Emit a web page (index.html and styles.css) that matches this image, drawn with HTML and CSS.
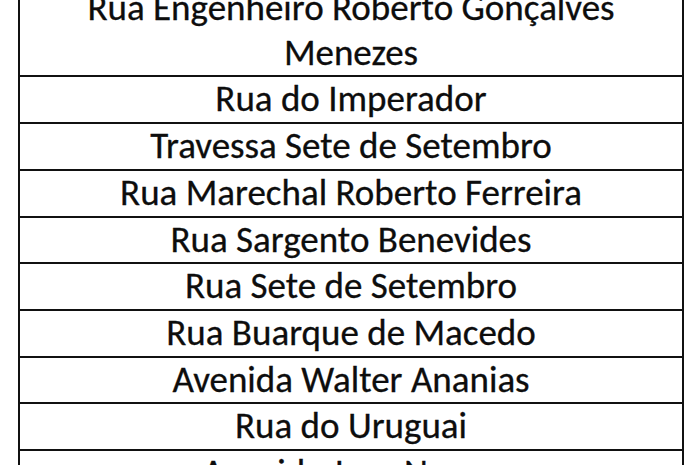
FILE: index.html
```html
<!DOCTYPE html>
<html lang="pt">
<head>
<meta charset="utf-8">
<link rel="stylesheet" href="styles.css">
</head>
<body>
<table class="streets">
  <tr><td>Rua Engenheiro Roberto Gonçalves<br>Menezes</td></tr>
  <tr><td>Rua do Imperador</td></tr>
  <tr><td>Travessa Sete de Setembro</td></tr>
  <tr><td>Rua Marechal Roberto Ferreira</td></tr>
  <tr><td>Rua Sargento Benevides</td></tr>
  <tr><td>Rua Sete de Setembro</td></tr>
  <tr><td>Rua Buarque de Macedo</td></tr>
  <tr><td>Avenida Walter Ananias</td></tr>
  <tr><td>Rua do Uruguai</td></tr>
  <tr><td>Avenida Jose Nunes</td></tr>
</table>
</body>
</html>
```
FILE: styles.css
```css
html, body {
  margin: 0;
  padding: 0;
  background: #ffffff;
  overflow: hidden;
}
.streets {
  border-collapse: collapse;
  width: 666px;
  margin: -16px 0 0 18px;
  font-family: Carlito, Lato, "Open Sans", sans-serif;
  font-size: 37px;
  color: #0d0d0d;
}
.streets td {
  border: 2px solid #111111;
  padding: 0;
  line-height: 44.7px;
  text-align: center;
  -webkit-text-stroke: 0.3px #0d0d0d;
}
```
